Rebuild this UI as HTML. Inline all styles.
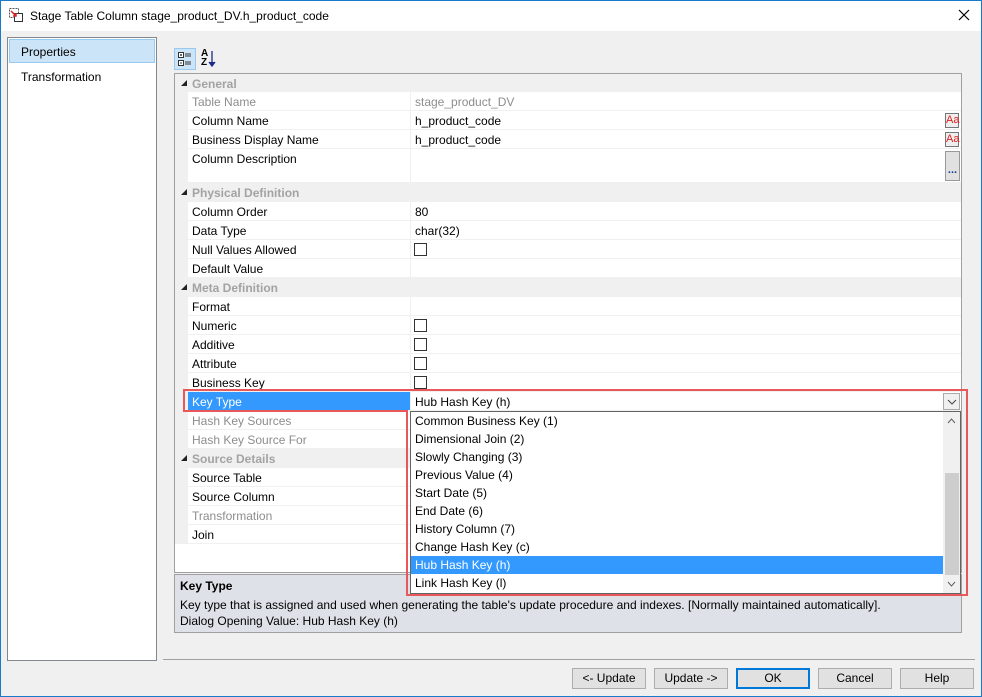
<!DOCTYPE html>
<html><head><style>
*{box-sizing:border-box;margin:0;padding:0}
body{width:982px;height:697px;overflow:hidden;font-family:"Liberation Sans",sans-serif;font-size:12px;color:#000;background:#f0f0f0;position:relative}
.abs{position:absolute}
.win{position:absolute;left:0;top:0;width:982px;height:697px;border:1px solid #1979ca}
.title{position:absolute;left:1px;top:1px;width:980px;height:30px;background:#fff}
.row{position:absolute;left:188px;width:773px;height:19px;border-bottom:1px solid #f0f0f0;background:#fff}
.row .n{position:absolute;left:4px;top:3px}
.row .v{position:absolute;left:227px;top:3px}
.row .d{position:absolute;left:222px;top:0;width:1px;height:100%;background:#f0f0f0}
.g{color:#8d8d8d}
.hdr{position:absolute;left:175px;width:786px;height:19px;background:#f0f0f0;color:#a3a3a3;font-weight:bold}
.hdr span{position:absolute;left:17px;top:3px}
.hdr i{position:absolute;left:6px;top:6px;width:0;height:0;border-left:6px solid transparent;border-bottom:6px solid #222}
.cb{position:absolute;left:226px;top:3px;width:13px;height:13px;border:1px solid #333;background:#fff}
.dd{position:absolute;left:411px;width:532px;height:18px;z-index:5}
.dd span{position:absolute;left:4px;top:2px}
.btn{position:absolute;top:668px;height:21px;border:1px solid #adadad;background:#e1e1e1;text-align:center;line-height:19px}
.top{z-index:6}
</style></head><body>
<div class="win"></div>
<div class="title"></div>
<svg class="abs" style="left:8px;top:7px" width="16" height="16"><rect x="1.5" y="1.5" width="9" height="9" fill="none" stroke="#555" stroke-dasharray="2,1"/><rect x="6.5" y="6.5" width="8" height="8" fill="#fff" stroke="#333"/><path d="M3 4 L8 9 M5 9 H8 V6" stroke="#d22" stroke-width="1.5" fill="none"/></svg>
<div class="abs" style="left:30px;top:9px;font-size:12px">Stage Table Column stage_product_DV.h_product_code</div>
<svg class="abs" style="left:958px;top:9px" width="12" height="12"><path d="M1 1L11 11M11 1L1 11" stroke="#000" stroke-width="1.2"/></svg>

<div class="abs" style="left:7px;top:37px;width:150px;height:624px;background:#fff;border:1px solid #828790"></div>
<div class="abs" style="left:9px;top:39px;width:146px;height:24px;background:#cce4f7;border:1px solid #99c9ef"></div>
<div class="abs" style="left:21px;top:45px">Properties</div>
<div class="abs" style="left:21px;top:70px">Transformation</div>

<div class="abs" style="left:174px;top:48px;width:22px;height:22px;background:#cce4f7;border:1px solid #99c9ef"></div>
<svg class="abs" style="left:177px;top:51px" width="16" height="16"><rect x="1.5" y="1.5" width="5" height="5" fill="#fff" stroke="#333"/><rect x="1.5" y="9.5" width="5" height="5" fill="#fff" stroke="#333"/><path d="M3 4h2M4 3v2M3 12h2M8 3h6M8 5h6M8 11h6M8 13h6" stroke="#333"/></svg>
<div class="abs" style="left:201px;top:49px;font-size:10px;line-height:9px;font-weight:bold">A<br>Z</div>
<svg class="abs" style="left:208px;top:50px" width="8" height="18"><path d="M4 1V15M1 12L4 16L7 12" stroke="#1a2b8c" stroke-width="1.3" fill="#1a2b8c"/></svg>

<div class="abs" style="left:174px;top:73px;width:788px;height:500px;background:#fff;border:1px solid #a0a0a0"></div>
<div class="abs" style="left:175px;top:74px;width:13px;height:470px;background:#f0f0f0"></div>

<div class="hdr" style="top:74px"><i></i><span>General</span></div>
<div class="row" style="top:92px"><div class="d"></div><span class="n g">Table Name</span><span class="v g">stage_product_DV</span></div>
<div class="row" style="top:111px"><div class="d"></div><span class="n">Column Name</span><span class="v">h_product_code</span></div>
<div class="row" style="top:130px"><div class="d"></div><span class="n">Business Display Name</span><span class="v">h_product_code</span></div>
<div class="row" style="top:149px;height:34px"><div class="d"></div><span class="n">Column Description</span></div>
<div class="hdr" style="top:183px"><i></i><span>Physical Definition</span></div>
<div class="row" style="top:202px"><div class="d"></div><span class="n">Column Order</span><span class="v">80</span></div>
<div class="row" style="top:221px"><div class="d"></div><span class="n">Data Type</span><span class="v">char(32)</span></div>
<div class="row" style="top:240px"><div class="d"></div><span class="n">Null Values Allowed</span><div class="cb"></div></div>
<div class="row" style="top:259px"><div class="d"></div><span class="n">Default Value</span></div>
<div class="hdr" style="top:278px"><i></i><span>Meta Definition</span></div>
<div class="row" style="top:297px"><div class="d"></div><span class="n">Format</span></div>
<div class="row" style="top:316px"><div class="d"></div><span class="n">Numeric</span><div class="cb"></div></div>
<div class="row" style="top:335px"><div class="d"></div><span class="n">Additive</span><div class="cb"></div></div>
<div class="row" style="top:354px"><div class="d"></div><span class="n">Attribute</span><div class="cb"></div></div>
<div class="row" style="top:373px"><div class="d"></div><span class="n">Business Key</span><div class="cb"></div></div>
<div class="row" style="top:392px"><div class="d"></div><div class="abs" style="left:0;top:0;width:222px;height:18px;background:#3399ff"></div><span class="n" style="color:#fff">Key Type</span><span class="v">Hub Hash Key (h)</span></div>
<div class="row" style="top:411px"><div class="d"></div><span class="n g">Hash Key Sources</span></div>
<div class="row" style="top:430px"><div class="d"></div><span class="n g">Hash Key Source For</span></div>
<div class="hdr" style="top:449px"><i></i><span>Source Details</span></div>
<div class="row" style="top:468px"><div class="d"></div><span class="n">Source Table</span></div>
<div class="row" style="top:487px"><div class="d"></div><span class="n">Source Column</span></div>
<div class="row" style="top:506px"><div class="d"></div><span class="n g">Transformation</span></div>
<div class="row" style="top:525px"><div class="d"></div><span class="n">Join</span></div>

<div class="abs" style="left:945px;top:113px;width:14px;height:15px;border:1px solid #777;background:#eee;color:#e02020;font-size:11px;line-height:13px;text-align:center">Aa</div>
<div class="abs" style="left:945px;top:132px;width:14px;height:15px;border:1px solid #777;background:#eee;color:#e02020;font-size:11px;line-height:13px;text-align:center">Aa</div>
<div class="abs" style="left:945px;top:151px;width:15px;height:30px;border:1px solid #999;background:#e1e1e1;color:#1a3a9c;font-size:11px;line-height:36px;text-align:center;font-weight:bold">...</div>

<div class="abs" style="left:943px;top:393px;width:17px;height:17px;border:1px solid #aaa;background:#f0f0f0"></div>
<svg class="abs" style="left:947px;top:398px" width="10" height="8"><path d="M1 2L5 6L9 2" stroke="#444" fill="none"/></svg>

<!-- description -->
<div class="abs" style="left:174px;top:574px;width:788px;height:59px;background:#dee1e7;border:1px solid #a0a0a0"></div>
<div class="abs" style="left:180px;top:579px;font-weight:bold">Key Type</div>
<div class="abs" style="left:180px;top:598px">Key type that is assigned and used when generating the table's update procedure and indexes. [Normally maintained automatically].</div>
<div class="abs" style="left:180px;top:614px">Dialog Opening Value: Hub Hash Key (h)</div>

<!-- dropdown list -->
<div class="abs top" style="left:410px;top:411px;width:551px;height:183px;background:#fff;border:1px solid #646464;z-index:4"></div>
<div class="dd" style="top:412px"><span>Common Business Key (1)</span></div>
<div class="dd" style="top:430px"><span>Dimensional Join (2)</span></div>
<div class="dd" style="top:448px"><span>Slowly Changing (3)</span></div>
<div class="dd" style="top:466px"><span>Previous Value (4)</span></div>
<div class="dd" style="top:484px"><span>Start Date (5)</span></div>
<div class="dd" style="top:502px"><span>End Date (6)</span></div>
<div class="dd" style="top:520px"><span>History Column (7)</span></div>
<div class="dd" style="top:538px"><span>Change Hash Key (c)</span></div>
<div class="dd" style="top:556px;background:#3399ff;color:#fff"><span>Hub Hash Key (h)</span></div>
<div class="dd" style="top:574px"><span>Link Hash Key (l)</span></div>
<div class="abs top" style="left:943px;top:412px;width:17px;height:181px;background:#f0f0f0"></div>
<div class="abs top" style="left:945px;top:473px;width:14px;height:102px;background:#cdcdcd"></div>
<svg class="abs top" style="left:947px;top:418px" width="9" height="6"><path d="M1 5L4.5 1L8 5" stroke="#606060" fill="none"/></svg>
<svg class="abs top" style="left:947px;top:581px" width="9" height="6"><path d="M1 1L4.5 5L8 1" stroke="#606060" fill="none"/></svg>

<!-- red boxes -->
<div class="abs top" style="left:183px;top:389px;width:785px;height:23px;border:2px solid #e8585a;border-bottom:none"></div>
<div class="abs top" style="left:183px;top:389px;width:224px;height:23px;border:2px solid #e8585a;border-top:none;border-right:none"></div>
<div class="abs top" style="left:406px;top:410px;width:562px;height:186px;border:2px solid #e8585a;border-top:none"></div>
<div class="abs top" style="left:183px;top:410px;width:225px;height:2px;background:#e8585a"></div>

<div class="abs" style="left:163px;top:659px;width:812px;height:1px;background:#a0a0a0"></div>
<div class="btn" style="left:572px;width:74px">&lt;- Update</div>
<div class="btn" style="left:654px;width:74px">Update -&gt;</div>
<div class="btn" style="left:736px;width:74px;border:2px solid #0078d7;line-height:17px">OK</div>
<div class="btn" style="left:818px;width:74px">Cancel</div>
<div class="btn" style="left:900px;width:74px">Help</div>
</body></html>
